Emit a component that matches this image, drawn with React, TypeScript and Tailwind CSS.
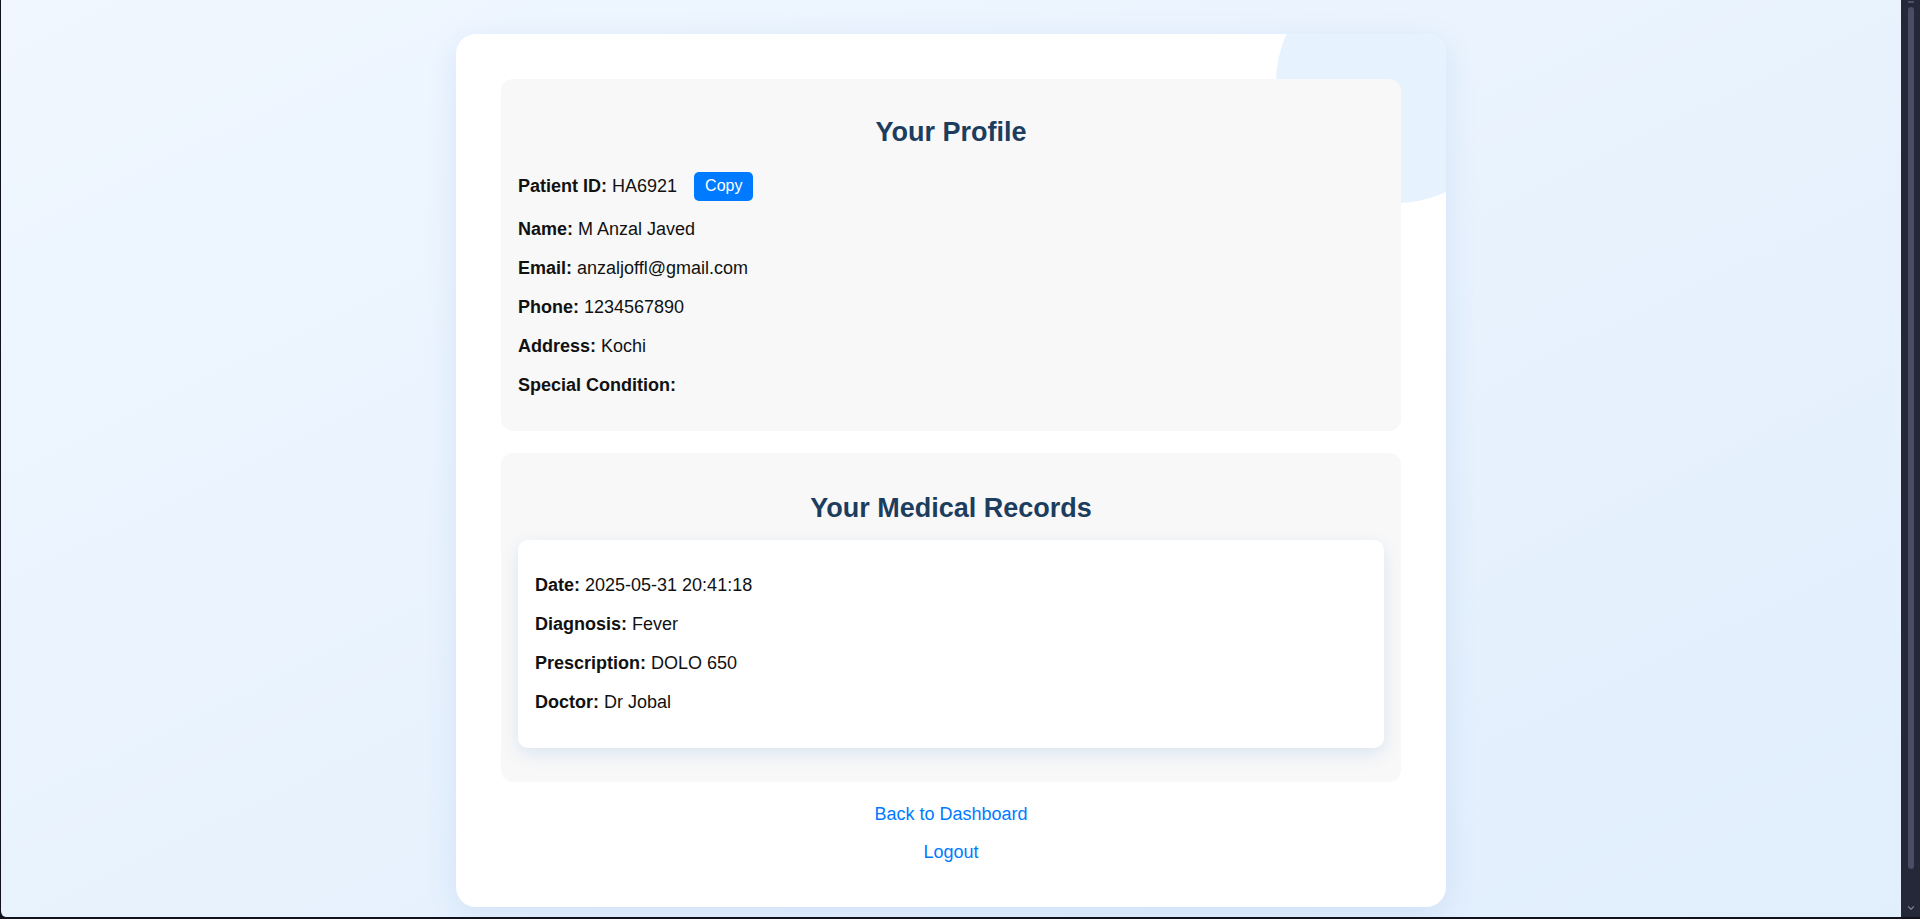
import { ChevronDown } from 'lucide-react'

const profileRows = [
  { label: 'Name', value: 'M Anzal Javed' },
  { label: 'Email', value: 'anzaljoffl@gmail.com' },
  { label: 'Phone', value: '1234567890' },
  { label: 'Address', value: 'Kochi' },
  { label: 'Special Condition', value: '' },
]

const records = [
  {
    id: 1,
    rows: [
      { label: 'Date', value: '2025-05-31 20:41:18' },
      { label: 'Diagnosis', value: 'Fever' },
      { label: 'Prescription', value: 'DOLO 650' },
      { label: 'Doctor', value: 'Dr Jobal' },
    ],
  },
]

function Row({ label, value }: { label: string; value: string }) {
  return (
    <p className="leading-[20px]">
      <span className="font-bold">{label}:</span>
      {value ? ` ${value}` : ''}
    </p>
  )
}

function Scrollbar() {
  return (
    <aside className="w-[19px] flex-shrink-0 bg-[#252838] flex flex-col items-center pl-[1px]">
      <div className="h-[3px] w-[6px] mt-[1px] border-t-2 border-[#6a6d85] opacity-60" />
      <div className="mt-[3px] h-[862px] w-[6px] rounded-full bg-[#4a4d66]" />
      <div className="flex-1" />
      <ChevronDown className="w-[10px] h-[10px] text-[#7a7d92] mb-[4px]" strokeWidth={3} />
    </aside>
  )
}

export default function App() {
  return (
    <div
      className="h-[919px] w-full flex flex-col overflow-hidden bg-[#10131f] text-[#111] text-[18px]"
      style={{ fontFamily: '"Liberation Sans", Arial, sans-serif' }}
    >
      <div className="flex flex-1 min-h-0 border-l border-[#10131f] rounded-bl-[6px] overflow-hidden">
        {/* Page */}
        <main className="flex-1 min-w-0 bg-gradient-to-br from-[#f0f7ff] to-[#e1eefc] pt-[34px] flex justify-center">
          <div className="relative w-[990px] h-fit bg-white rounded-[20px] px-[45px] pt-[45px] pb-[45px] overflow-hidden shadow-[0_8px_32px_rgba(30,100,200,0.1)]">
            {/* Decorative circle */}
            <div className="absolute -top-[71px] -right-[70px] w-[240px] h-[240px] rounded-full bg-[#e6f2fe]" />

            {/* Profile */}
            <section className="relative rounded-[12px] bg-[#f8f8f8] px-[17px] pt-[38.4px] pb-[36px]">
              <h2 className="text-center text-[27px] leading-[30px] font-bold text-[#1c3d5e]">Your Profile</h2>
              <div className="mt-[22.6px] flex items-center h-[33px] leading-[20px]">
                <span className="font-bold">Patient ID:</span>
                <span>&nbsp;HA6921</span>
                <button className="ml-[17px] h-[29px] px-[11px] rounded-[5px] bg-[#007bff] text-white text-[16px] leading-none">
                  Copy
                </button>
              </div>
              <div className="mt-[16px] flex flex-col gap-[19px]">
                {profileRows.map((r) => (
                  <Row key={r.label} label={r.label} value={r.value} />
                ))}
              </div>
            </section>

            {/* Medical records */}
            <section className="relative mt-[22px] rounded-[12px] bg-[#f8f8f8] px-[17px] pt-[40px] pb-[34px]">
              <h2 className="text-center text-[27px] leading-[30px] font-bold text-[#1c3d5e]">Your Medical Records</h2>
              {records.map((rec) => (
                <div
                  key={rec.id}
                  className="mt-[17px] bg-white rounded-[10px] px-[17px] pt-[34.7px] pb-[36px] flex flex-col gap-[19px] shadow-[0_6px_18px_rgba(0,100,200,0.12)]"
                >
                  {rec.rows.map((r) => (
                    <Row key={r.label} label={r.label} value={r.value} />
                  ))}
                </div>
              ))}
            </section>

            {/* Links */}
            <div className="relative mt-[22px] flex flex-col items-center gap-[18px] leading-[20px] text-[#007bff]">
              <a href="#">Back to Dashboard</a>
              <a href="#">Logout</a>
            </div>
          </div>
        </main>
        <Scrollbar />
      </div>
      <div className="h-[2px] flex-shrink-0" />
    </div>
  )
}
